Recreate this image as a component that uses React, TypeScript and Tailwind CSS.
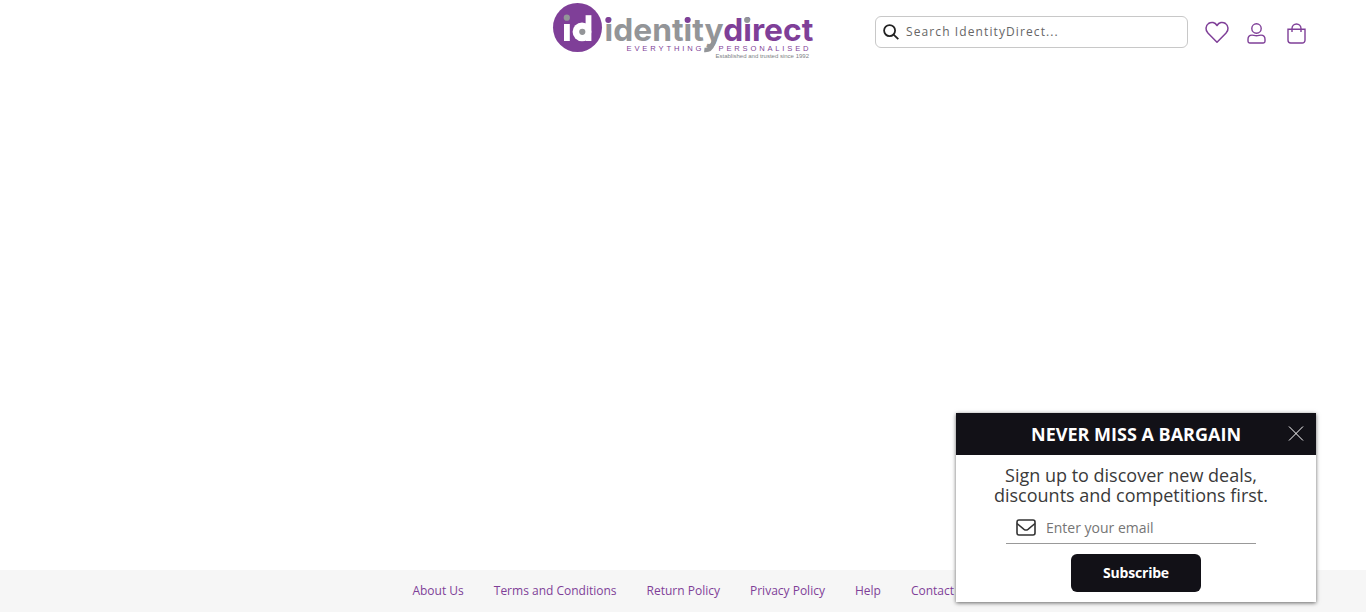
import React from "react";

const links = ["About Us", "Terms and Conditions", "Return Policy", "Privacy Policy", "Help", "Contact Us"];

function Logo() {
  return (
    <svg width="262" height="62" viewBox="552 0 262 62" className="shrink-0" role="img" aria-label="identitydirect">
      <circle cx="577.5" cy="27.5" r="24.5" fill="#7f3f98" />
      <rect x="564" y="24" width="5.8" height="17" fill="#fff" />
      <circle cx="566.8" cy="17.7" r="3.1" fill="#939598" />
      <circle cx="582" cy="31.8" r="9.4" fill="#fff" />
      <rect x="585.6" y="15.2" width="5.8" height="25.8" fill="#fff" />
      <circle cx="582.3" cy="31.8" r="3.1" fill="#939598" />
      <g fontFamily="Inter, sans-serif" fontWeight="700" fontSize="31">
        <text x="604.6" y="41" textLength="119" lengthAdjust="spacingAndGlyphs" fill="#939598">identity</text>
        <text x="723.3" y="41" textLength="90" lengthAdjust="spacingAndGlyphs" fill="#7f3f98">direct</text>
      </g>
      <path d="M715 38.500 712.600 44.500Q710.300 50.600 704.300 50" fill="none" stroke="#939598" strokeWidth="4.600" />
      <circle cx="608.3" cy="20" r="3" fill="#7f3f98" />
      <circle cx="687.6" cy="20" r="3" fill="#7f3f98" />
      <circle cx="747.1" cy="20" r="3" fill="#939598" />
      <g fontFamily="Liberation Sans, sans-serif" fill="#7f3f98" fontSize="7.6">
        <text x="626.5" y="51" textLength="75" lengthAdjust="spacing">EVERYTHING</text>
        <text x="718.5" y="51" textLength="90" lengthAdjust="spacing">PERSONALISED</text>
      </g>
      <text x="715.5" y="58.3" fontFamily="Liberation Sans, sans-serif" fontSize="5.6" textLength="93.5" lengthAdjust="spacingAndGlyphs" fill="#808285">Established and trusted since 1992</text>
    </svg>
  );
}

export default function App() {
  return (
    <div className="relative flex h-[612px] w-full flex-col overflow-hidden bg-white font-['Open_Sans',sans-serif]">
      <header className="grid h-16 grid-cols-[1fr_262px_1fr]">
        <div />
        <Logo />
        <div className="flex items-start pl-[61px]">
          <label className="mt-4 flex h-8 w-[313px] shrink-0 items-center rounded-md border border-[#c8c8c8] pl-[7px]">
            <svg width="16" height="16" viewBox="0 0 16 16" fill="none" stroke="#222" strokeWidth="1.8">
              <circle cx="6.6" cy="6.6" r="5.5" />
              <path d="m10.6 10.6 4.7 4.5" />
            </svg>
            <input className="ml-[7px] w-60 text-xs tracking-[1.1px] outline-none placeholder:text-[#666]" placeholder="Search IdentityDirect..." />
          </label>
          <div className="flex shrink-0 pt-[21px] pl-[17px] text-[#7f3f98]">
            <svg width="24" height="24" viewBox="0 0 24 24" fill="none" stroke="currentColor" strokeWidth="1.5">
              <path d="M12 21.2 2.9 12C.1 9.1.5 4.6 3.5 2.5 6.4.6 10 1.2 12 4.5c2-3.3 5.6-3.9 8.5-2 3 2.1 3.4 6.6.6 9.5Z" strokeLinejoin="round" />
            </svg>
            <svg className="ml-[17px]" width="22" height="24" viewBox="0 0 22 24" fill="none" stroke="currentColor" strokeWidth="1.4">
              <circle cx="10.5" cy="7.5" r="4.7" />
              <path d="M2 20.300v-2c0-2.600 1.700-4.200 4-4.200 1.500 0 2.400.7 4.500.7s3-.7 4.500-.7c2.300 0 4 1.600 4 4.200v2c0 1.200-.5 1.700-1.700 1.700H3.700c-1.200 0-1.700-.5-1.700-1.700Z" />
            </svg>
            <svg className="ml-[18px]" width="22" height="24" viewBox="0 0 22 24" fill="none" stroke="currentColor" strokeWidth="1.4">
              <path d="M2 8.300h17v11a2.700 2.700 0 0 1-2.700 2.700H4.700A2.700 2.700 0 0 1 2 19.300ZM6 11V7.500a4.500 4.500 0 0 1 9 0V11" />
            </svg>
          </div>
        </div>
      </header>
      <main className="flex-1" />
      <footer className="flex h-[42px] gap-[30px] bg-[#f6f6f6] pl-[412.4px] text-xs leading-[42px] whitespace-nowrap text-[#7f3f98]">
        {links.map((l) => <a key={l} href="#">{l}</a>)}
      </footer>
      <section className="absolute top-[413px] right-[50px] flex h-[189px] w-[360px] flex-col bg-white shadow-[0_1px_4px_rgba(0,0,0,0.6)]">
        <div className="flex h-[42px] shrink-0 items-center justify-between bg-[#121117] pr-3 pl-[75px] text-white">
          <h2 className="text-lg font-bold whitespace-nowrap">NEVER MISS A BARGAIN</h2>
          <svg width="16" height="16" viewBox="0 0 16 16" stroke="currentColor" strokeWidth="1"><path d="m1 .5 14 14M15 .5l-14 14" /></svg>
        </div>
        <p className="mt-[10px] pr-2.5 text-center text-lg leading-5 text-[#3a3a3a]">
          Sign up to discover new deals,<br />discounts and competitions first.
        </p>
        <div className="mt-[7px] ml-[50px] flex h-8 w-[250px] shrink-0 items-center border-b border-[#999] pl-2.5">
          <svg width="20" height="17" viewBox="0 0 20 17" fill="none" stroke="#333" strokeWidth="1.6">
            <rect x="1" y="1" width="18" height="15" rx="2" />
            <path d="m1 4.500 7 5.800q2 1.400 4 0l7-5.800" />
          </svg>
          <input className="ml-2.5 w-48 text-sm outline-none placeholder:text-[#757575]" placeholder="Enter your email" />
        </div>
        <button className="mt-2.5 ml-[115px] h-[38px] w-[130px] rounded-md bg-[#121117] text-sm font-bold tracking-[-0.2px] text-white">Subscribe</button>
      </section>
    </div>
  );
}
